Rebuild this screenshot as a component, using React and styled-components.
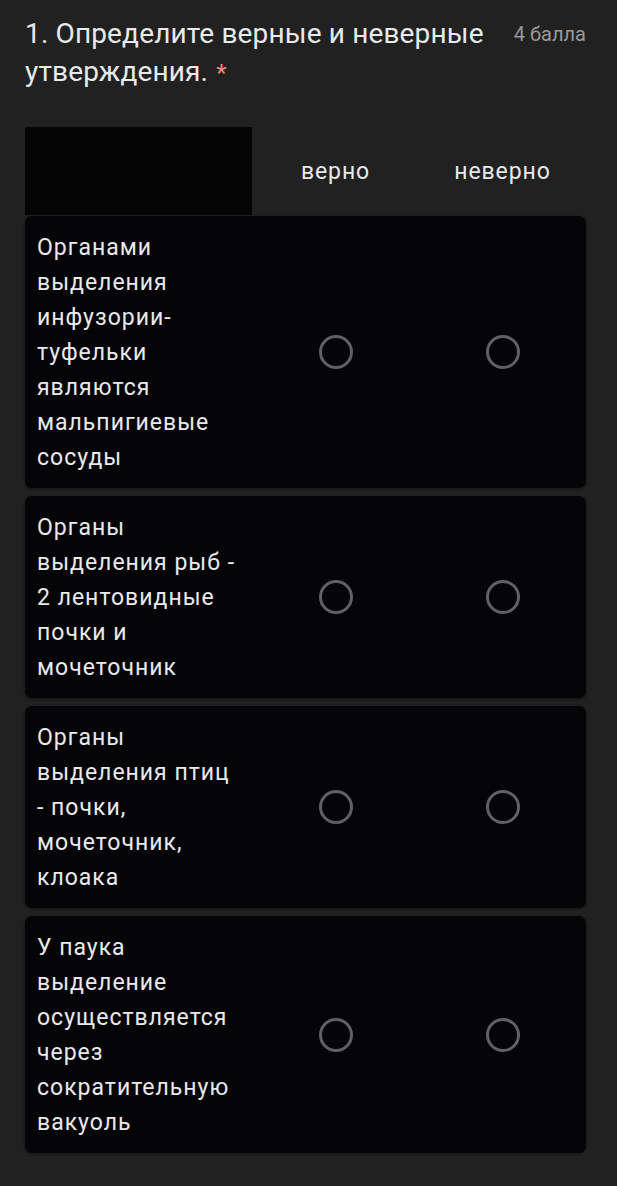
import React from 'react';
import styled, { createGlobalStyle } from 'styled-components';

const GlobalStyle = createGlobalStyle`
  html, body {
    margin: 0;
    padding: 0;
    background: #212121;
  }
  body {
    font-family: Roboto, "Noto Sans", sans-serif;
    color: #e8eaed;
  }
`;

const Page = styled.div`
  width: 617px;
  min-height: 1186px;
  box-sizing: border-box;
  padding: 15px 31px 34px 25px;
  background: #212121;
`;

const Header = styled.div`
  display: flex;
  align-items: flex-start;
  justify-content: space-between;
  gap: 16px;
`;

const Title = styled.div`
  font-size: 28px;
  line-height: 38px;
  letter-spacing: 0.15px;
  color: #e8eaed;
`;

const Star = styled.span`
  color: #f28b82;
  margin-left: 8px;
  font-size: 24px;
`;

const Points = styled.div`
  flex-shrink: 0;
  font-size: 20px;
  line-height: 38px;
  color: #9a9a9a;
  white-space: nowrap;
`;

const Grid = styled.div`
  margin-top: 35px;
  display: flex;
  flex-direction: column;
  gap: 8px;
`;

const HeadRow = styled.div`
  display: grid;
  grid-template-columns: 227px 1fr 1fr;
  height: 88px;
  margin-bottom: -7px;
`;

const HeadBlank = styled.div`
  background: #050505;
  border-radius: 2px 2px 0 0;
`;

const HeadLabel = styled.div`
  display: flex;
  align-items: center;
  justify-content: center;
  font-size: 23px;
  letter-spacing: 0.9px;
  color: #e8eaed;
`;

const Row = styled.div`
  display: grid;
  grid-template-columns: 227px 1fr 1fr;
  align-items: center;
  background: #050507;
  border-radius: 7px;
  box-shadow: 0 1px 3px rgba(0, 0, 0, 0.45);
`;

const Statement = styled.div`
  padding: 14px 8px 13px 12px;
  font-size: 23px;
  line-height: 35px;
  letter-spacing: 1px;
  color: #e8eaed;
  white-space: nowrap;
`;

const Cell = styled.div`
  display: flex;
  align-items: center;
  justify-content: center;
`;

const Radio = styled.div`
  width: 28px;
  height: 28px;
  border-radius: 50%;
  border: 3px solid #5f6163;
`;

const rows = [
  ['Органами', 'выделения', 'инфузории-', 'туфельки', 'являются', 'мальпигиевые', 'сосуды'],
  ['Органы', 'выделения рыб -', '2 лентовидные', 'почки и', 'мочеточник'],
  ['Органы', 'выделения птиц', '- почки,', 'мочеточник,', 'клоака'],
  ['У паука', 'выделение', 'осуществляется', 'через', 'сократительную', 'вакуоль'],
];

export default function App() {
  return (
    <>
      <GlobalStyle />
      <Page>
        <Header>
          <Title>
            1. Определите верные и неверные утверждения.<Star>*</Star>
          </Title>
          <Points>4 балла</Points>
        </Header>
        <Grid>
          <HeadRow>
            <HeadBlank />
            <HeadLabel>верно</HeadLabel>
            <HeadLabel>неверно</HeadLabel>
          </HeadRow>
          {rows.map((lines, i) => (
            <Row key={i}>
              <Statement>
                {lines.map((l, j) => (
                  <div key={j}>{l}</div>
                ))}
              </Statement>
              <Cell><Radio /></Cell>
              <Cell><Radio /></Cell>
            </Row>
          ))}
        </Grid>
      </Page>
    </>
  );
}
